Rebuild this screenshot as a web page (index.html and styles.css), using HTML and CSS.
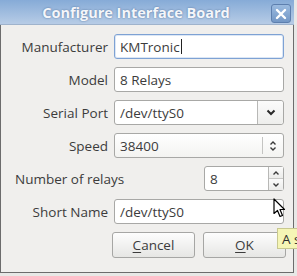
FILE: index.html
```
<!DOCTYPE html>
<html lang="en">
<head>
    <meta charset="UTF-8">
    <title>Configure Interface Board</title>
    <link rel="stylesheet" href="styles.css">
</head>
<body>
    <div class="window">
        <div class="titlebar">
            <span class="title">Configure Interface Board</span>
            <span class="close">
                <svg width="12" height="12" viewBox="0 0 12 12"><path d="M2 2 L10 10 M10 2 L2 10" stroke="#ffffff" stroke-width="2.4" stroke-linecap="round"/></svg>
            </span>
        </div>

        <div class="content">
            <div class="form">
                <label>Manufacturer</label>
                <div class="entry focused">KMTronic<span class="caret"></span></div>

                <label>Model</label>
                <div class="entry">8 Relays</div>

                <label>Serial Port</label>
                <div class="entry combo">
                    <span class="combo-text">/dev/ttyS0</span>
                    <span class="combo-btn">
                        <svg width="10" height="7" viewBox="0 0 10 7"><path d="M1.5 1.5 L5 5 L8.5 1.5" fill="none" stroke="#2a2a2a" stroke-width="2"/></svg>
                    </span>
                </div>

                <label>Speed</label>
                <div class="entry select">
                    <span class="combo-text">38400</span>
                    <span class="select-arrows">
                        <svg width="8" height="12" viewBox="0 0 8 12"><path d="M1.5 4.5 L4 2 L6.5 4.5 M1.5 7.5 L4 10 L6.5 7.5" fill="none" stroke="#3a3a3a" stroke-width="1.4"/></svg>
                    </span>
                </div>

                <div class="spin-row">
                    <label>Number of relays</label>
                    <div class="entry spin">
                        <span class="combo-text">8</span>
                        <span class="spin-btns">
                            <span class="spin-up"><svg width="8" height="6" viewBox="0 0 8 6"><path d="M1.5 4.5 L4 2 L6.5 4.5" fill="none" stroke="#3a3a3a" stroke-width="1.4"/></svg></span>
                            <span class="spin-down"><svg width="8" height="6" viewBox="0 0 8 6"><path d="M1.5 1.5 L4 4 L6.5 1.5" fill="none" stroke="#3a3a3a" stroke-width="1.4"/></svg></span>
                        </span>
                    </div>
                </div>

                <label>Short Name</label>
                <div class="entry">/dev/ttyS0</div>
            </div>

            <div class="buttons">
                <button><u>C</u>ancel</button>
                <button><u>O</u>K</button>
            </div>
        </div>
    </div>

    <svg class="cursor" width="13" height="20" viewBox="0 0 13 20">
        <path d="M1 1 L1 15.5 L4.5 12.5 L7 18.5 L9.5 17.5 L7 11.5 L11.5 11.5 Z" fill="#ffffff" stroke="#000000" stroke-width="1.2" stroke-linejoin="round"/>
    </svg>
    <div class="tooltip"><span>A s</span></div>
</body>
</html>
```

FILE: styles.css
```
body {
    margin: 0;
    padding: 0;
    width: 297px;
    height: 276px;
    overflow: hidden;
    background-color: #e8e8e6;
    font-family: "Open Sans", "DejaVu Sans", sans-serif;
    font-size: 13px;
    color: #3c3c3c;
    position: relative;
}
.window {
    width: 292px;
    height: 272px;
    border: 1px solid #6c6c6c;
    border-top: none;
    background-color: #f0efed;
    display: flex;
    flex-direction: column;
}
.titlebar {
    height: 24px;
    background: linear-gradient(#86abd7, #b7cce6);
    border-bottom: 1px solid #9fb3cc;
    display: flex;
    align-items: center;
    justify-content: center;
    position: relative;
    margin: 0 -1px;
}
.title {
    font-weight: bold;
    font-size: 14.5px;
    color: #f4f6fa;
    text-shadow: 0 0 2px #4e6f99;
    margin-left: -22px;
}
.close {
    position: absolute;
    right: 3px;
    top: 4px;
    width: 18px;
    height: 17px;
    border: 1px solid #5d7fae;
    border-radius: 3px;
    background: linear-gradient(#9bbbe0, #7397c5);
    display: flex;
    align-items: center;
    justify-content: center;
}
.content {
    padding: 9px 8px 0 13px;
}
.form {
    display: grid;
    grid-template-columns: 94px 170px;
    column-gap: 6px;
    row-gap: 8px;
    align-items: center;
}
.form label {
    text-align: right;
    white-space: nowrap;
    font-size: 13.5px;
}
.entry {
    box-sizing: border-box;
    height: 25px;
    background: #ffffff;
    border: 1px solid #a8a8a6;
    border-radius: 3px;
    padding: 0 5px;
    display: flex;
    align-items: center;
    color: #3c3c3c;
    font-size: 13.5px;
}
.entry.focused {
    border-color: #7ea2d4;
    box-shadow: inset 0 0 0 1px #dce7f5;
}
.caret {
    display: inline-block;
    width: 1px;
    height: 15px;
    background: #222222;
    margin-left: 1px;
}
.combo {
    padding-right: 0;
}
.combo-text {
    flex: 1;
}
.combo-btn {
    width: 25px;
    height: 100%;
    border-left: 1px solid #b8b8b6;
    display: flex;
    align-items: center;
    justify-content: center;
    background: linear-gradient(#fbfbfb, #eeeeec);
    border-radius: 0 3px 3px 0;
}
.select {
    padding-right: 0;
    background: linear-gradient(#ffffff, #f3f3f1);
}
.select-arrows {
    width: 20px;
    height: 17px;
    border-left: 1px solid #c4c4c2;
    display: flex;
    align-items: center;
    justify-content: center;
}
.spin-row {
    grid-column: 1 / 3;
    display: flex;
    justify-content: space-between;
    align-items: center;
    margin-left: 1px;
}
.spin-row label {
    text-align: left;
}
.spin {
    width: 80px;
    padding-right: 0;
}
.spin-btns {
    width: 14px;
    height: 100%;
    border-left: 1px solid #b8b8b6;
    display: flex;
    flex-direction: column;
}
.spin-up, .spin-down {
    flex: 1;
    display: flex;
    align-items: center;
    justify-content: center;
    background: linear-gradient(#fbfbfb, #ececea);
}
.spin-up {
    border-bottom: 1px solid #c8c8c6;
}
.buttons {
    display: flex;
    justify-content: flex-end;
    gap: 8px;
    margin-top: 8px;
    margin-right: -1px;
}
.buttons button {
    width: 83px;
    height: 26px;
    font-family: "Open Sans", "DejaVu Sans", sans-serif;
    font-size: 13.5px;
    color: #3c3c3c;
    background: linear-gradient(#fdfdfd, #e6e6e4);
    border: 1px solid #a6a6a4;
    border-radius: 3px;
}
.buttons button u {
    text-underline-offset: 2px;
}
.cursor {
    position: absolute;
    left: 273px;
    top: 198px;
}
.tooltip {
    position: absolute;
    left: 277px;
    top: 228px;
    width: 20px;
    height: 21px;
    box-sizing: border-box;
    overflow: hidden;
    background: #f5f5b5;
    border: 1px solid #c8c890;
    border-right: none;
    padding: 1px 0 0 4px;
    font-size: 13.5px;
    color: #2e2e2e;
    white-space: nowrap;
}
```
